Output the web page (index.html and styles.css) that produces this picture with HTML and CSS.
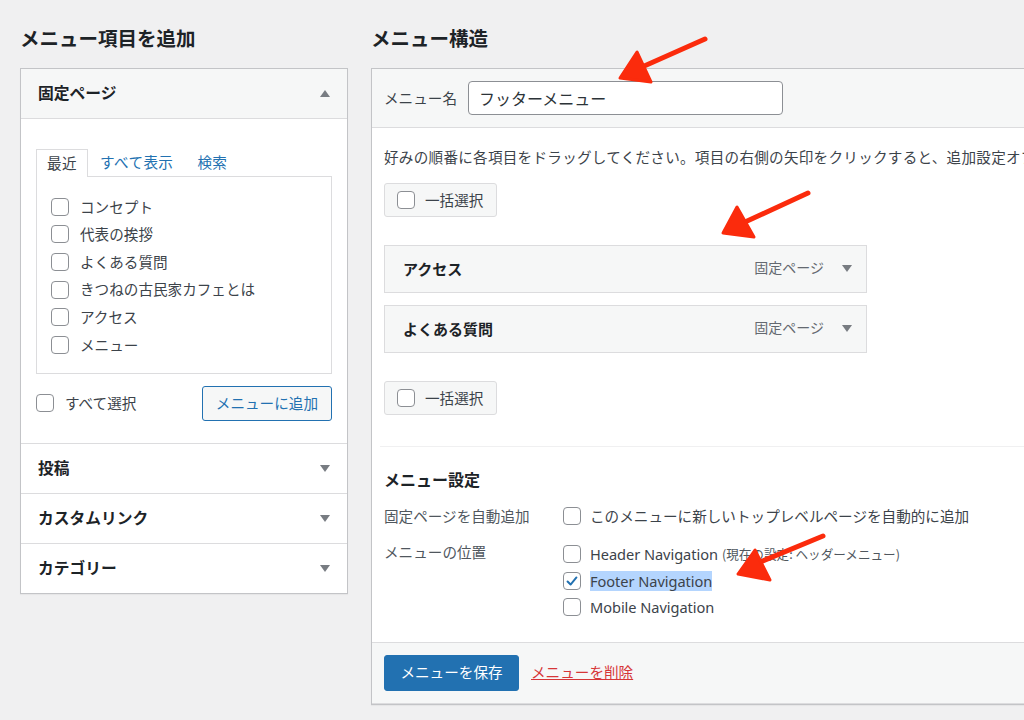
FILE: index.html
```html
<!DOCTYPE html>
<html lang="ja">
<head>
<meta charset="utf-8">
<title>メニュー</title>
<link rel="stylesheet" href="styles.css">
</head>
<body>
<div class="page">
  <section class="col col-left">
    <h2 class="col-title">メニュー項目を追加</h2>
    <div class="acc">
      <div class="acc-sec open">
        <div class="acc-head"><span>固定ページ</span><i class="tri tri-up"></i></div>
        <div class="acc-body">
          <div class="tabs">
            <span class="tab tab-active">最近</span>
            <a class="tab">すべて表示</a>
            <a class="tab">検索</a>
          </div>
          <ul class="tab-panel">
            <li class="check-row"><span class="cb"></span>コンセプト</li>
            <li class="check-row"><span class="cb"></span>代表の挨拶</li>
            <li class="check-row"><span class="cb"></span>よくある質問</li>
            <li class="check-row"><span class="cb"></span>きつねの古民家カフェとは</li>
            <li class="check-row"><span class="cb"></span>アクセス</li>
            <li class="check-row"><span class="cb"></span>メニュー</li>
          </ul>
          <div class="acc-actions">
            <label class="select-all"><span class="cb"></span>すべて選択</label>
            <button class="btn-secondary">メニューに追加</button>
          </div>
        </div>
      </div>
      <div class="acc-sec"><div class="acc-head"><span>投稿</span><i class="tri tri-down"></i></div></div>
      <div class="acc-sec"><div class="acc-head"><span>カスタムリンク</span><i class="tri tri-down"></i></div></div>
      <div class="acc-sec"><div class="acc-head"><span>カテゴリー</span><i class="tri tri-down"></i></div></div>
    </div>
  </section>

  <section class="col col-right">
    <h2 class="col-title">メニュー構造</h2>
    <div class="menu-box">
      <div class="menu-head">
        <label class="name-label">メニュー名</label>
        <div class="name-input">フッターメニュー</div>
      </div>
      <div class="menu-body">
        <p class="desc">好みの順番に各項目をドラッグしてください。項目の右側の矢印をクリックすると、追加設定オプションを表示します。</p>
        <div class="bulk"><span class="cb"></span>一括選択</div>
        <ul class="items">
          <li class="item"><span class="item-title">アクセス</span><span class="item-type">固定ページ</span><i class="tri tri-down"></i></li>
          <li class="item"><span class="item-title">よくある質問</span><span class="item-type">固定ページ</span><i class="tri tri-down"></i></li>
        </ul>
        <div class="bulk"><span class="cb"></span>一括選択</div>
        <div class="settings">
          <h3 class="settings-title">メニュー設定</h3>
          <div class="set-row">
            <div class="set-label">固定ページを自動追加</div>
            <div class="set-opts">
              <div class="opt"><span class="cb"></span>このメニューに新しいトップレベルページを自動的に追加</div>
            </div>
          </div>
          <div class="set-row">
            <div class="set-label set-label-loc">メニューの位置</div>
            <div class="set-opts">
              <div class="opt"><span class="cb"></span><span class="latin">Header Navigation</span><span class="note">(現在の設定: ヘッダーメニュー)</span></div>
              <div class="opt"><span class="cb cb-checked"><svg viewBox="0 0 18 18" width="16" height="16"><path d="M4 9.5 L7.4 13 L14 5" fill="none" stroke="#2271b1" stroke-width="2.2" stroke-linecap="round" stroke-linejoin="round"/></svg></span><span class="latin sel">Footer Navigation</span></div>
              <div class="opt"><span class="cb"></span><span class="latin">Mobile Navigation</span></div>
            </div>
          </div>
        </div>
      </div>
      <div class="menu-foot">
        <button class="btn-primary">メニューを保存</button>
        <a class="delete-link">メニューを削除</a>
      </div>
    </div>
  </section>
</div>

<svg class="arrows" width="1024" height="720" viewBox="0 0 1024 720">
  <g fill="#fb2b0c" stroke="#fb2b0c" stroke-linecap="round" stroke-linejoin="round">
    <path d="M705 39 L642 67" stroke-width="5" fill="none"/>
    <polygon points="637,52 620,78 651,82" stroke-width="3"/>
    <path d="M808 193 L745 222" stroke-width="5" fill="none"/>
    <polygon points="737,207 723,233 754,237" stroke-width="3"/>
    <path d="M823 536 L760 562" stroke-width="5" fill="none"/>
    <polygon points="755,550 738,574 770,580" stroke-width="3"/>
  </g>
</svg>
</body>
</html>
```

FILE: styles.css
```css
* { box-sizing: border-box; }

html, body {
  margin: 0;
  padding: 0;
}

body {
  width: 1024px;
  height: 720px;
  overflow: hidden;
  position: relative;
  background: #f0f0f1;
  color: #3c434a;
  font-family: "Noto Sans CJK JP", "Noto Sans", sans-serif;
  font-size: 14.6px;
  line-height: 1.4;
}

ul { list-style: none; margin: 0; padding: 0; }

.page {
  display: flex;
  gap: 23px;
  padding-left: 20px;
}

.col { flex: none; }
.col-left { width: 328px; }
.col-right { width: 700px; }

.col-title {
  margin: 0;
  padding-top: 24px;
  height: 68px;
  font-size: 19.5px;
  line-height: 28px;
  font-weight: 700;
  color: #1d2327;
}

/* checkbox */
.cb {
  flex: none;
  display: inline-flex;
  align-items: center;
  justify-content: center;
  width: 18px;
  height: 18px;
  border: 1px solid #8c8f94;
  border-radius: 4px;
  background: #fff;
}

/* triangles */
.tri {
  flex: none;
  display: inline-block;
  width: 0;
  height: 0;
  border-left: 5px solid transparent;
  border-right: 5px solid transparent;
}
.tri-down { border-top: 7px solid #787c82; }
.tri-up { border-bottom: 7px solid #787c82; }

/* accordion */
.acc {
  background: #fff;
  border: 1px solid #c3c4c7;
  box-shadow: 0 1px 1px rgba(0,0,0,.04);
}
.acc-sec + .acc-sec { border-top: 1px solid #dcdcde; }

.acc-head {
  height: 49px;
  display: flex;
  align-items: center;
  justify-content: space-between;
  padding: 0 17px 0 17px;
  font-size: 15.75px;
  font-weight: 700;
  color: #1d2327;
}
.open .acc-head {
  background: #f6f7f7;
  border-bottom: 1px solid #dcdcde;
  height: 50px;
}

.acc-body {
  padding: 30px 15px 22px 15px;
}

.tabs {
  display: flex;
  height: 27px;
}
.tab {
  padding: 0 12px;
  line-height: 26px;
  color: #2271b1;
  text-decoration: none;
  letter-spacing: 0.4px;
}
.tab-active {
  color: #3c434a;
  background: #fff;
  border: 1px solid #dcdcde;
  border-bottom: none;
  height: 28px;
  position: relative;
  z-index: 1;
  padding: 0 10px;
}

.tab-panel {
  border: 1px solid #dcdcde;
  padding: 16px 14px 14px 14px;
  background: #fff;
}
.check-row {
  display: flex;
  align-items: center;
  gap: 11px;
  height: 27.6px;
}

.acc-actions {
  margin-top: 12px;
  display: flex;
  align-items: center;
  justify-content: space-between;
}
.select-all {
  display: flex;
  align-items: center;
  gap: 11px;
}

.btn-secondary {
  font: inherit;
  height: 35px;
  padding: 0 13px;
  border: 1px solid #2271b1;
  border-radius: 3px;
  background: #f6f7f7;
  color: #2271b1;
}

/* menu box */
.menu-box {
  background: #fff;
  border: 1px solid #c3c4c7;
  border-right: none;
  box-shadow: 0 1px 1px rgba(0,0,0,.04);
}

.menu-head {
  background: #f6f7f7;
  border-bottom: 1px solid #dcdcde;
  padding: 12px 12px;
  display: flex;
  align-items: center;
  gap: 11px;
}
.name-label { color: #3c434a; }
.name-input {
  width: 315px;
  height: 34px;
  border: 1px solid #8c8f94;
  border-radius: 4px;
  background: #fff;
  padding: 0 10px;
  font-size: 16px;
  line-height: 32px;
  color: #2c3338;
}

.menu-body {
  padding: 19px 0 21px 12px;
  overflow: hidden;
}

.desc {
  margin: 0;
  line-height: 20px;
  white-space: nowrap;
  letter-spacing: 0.25px;
}

.bulk {
  margin-top: 16px;
  width: 113px;
  height: 34px;
  display: flex;
  align-items: center;
  gap: 10px;
  padding-left: 12px;
  border: 1px solid #dcdcde;
  border-radius: 3px;
  background: #f6f7f7;
}

.items {
  margin-top: 28px;
  margin-bottom: 28px;
  display: flex;
  flex-direction: column;
  gap: 12px;
}
.item {
  width: 483px;
  height: 48px;
  display: flex;
  align-items: center;
  padding: 0 14px 2px 18px;
  background: #f6f7f7;
  border: 1px solid #dcdcde;
}
.item-title {
  font-weight: 700;
  color: #1d2327;
  font-size: 15px;
}
.item-type {
  margin-left: auto;
  margin-right: 18px;
  color: #646970;
  font-size: 14px;
}
.items + .bulk { margin-top: 0; }

.settings {
  margin-top: 31px;
  margin-left: -4px;
  padding-left: 4px;
  border-top: 1px solid #f0f0f1;
  padding-top: 20px;
}
.settings-title {
  margin: 0;
  font-size: 16px;
  line-height: 24px;
  font-weight: 700;
  color: #1d2327;
}

.set-row {
  margin-top: 12px;
  display: flex;
}
.set-label {
  width: 179px;
  flex: none;
  line-height: 26px;
  color: #50575e;
}
.set-label-loc { line-height: 22px; }
.set-opts { display: flex; flex-direction: column; }
.opt {
  display: flex;
  align-items: center;
  gap: 9px;
  height: 26.5px;
  line-height: 26px;
}
.set-row:first-of-type .opt { height: 26px; }

.latin {
  font-family: "Noto Sans", "Noto Sans CJK JP", sans-serif;
  font-size: 14.6px;
  letter-spacing: -0.05px;
}
.sel {
  background: #b4d5fe;
  line-height: 20px;
}
.note {
  margin-left: -5px;
  font-size: 12.6px;
  color: #50575e;
}

.menu-foot {
  background: #f6f7f7;
  border-top: 1px solid #dcdcde;
  border-bottom: 1px solid #dcdcde;
  padding: 12px 12px;
  display: flex;
  align-items: center;
  gap: 12px;
}
.btn-primary {
  font: inherit;
  height: 36px;
  width: 135px;
  border: 1px solid #2271b1;
  border-radius: 3px;
  background: #2271b1;
  color: #fff;
}
.delete-link {
  color: #d63638;
  text-decoration: underline;
}

.arrows {
  position: absolute;
  top: 0;
  left: 0;
  pointer-events: none;
}
```
